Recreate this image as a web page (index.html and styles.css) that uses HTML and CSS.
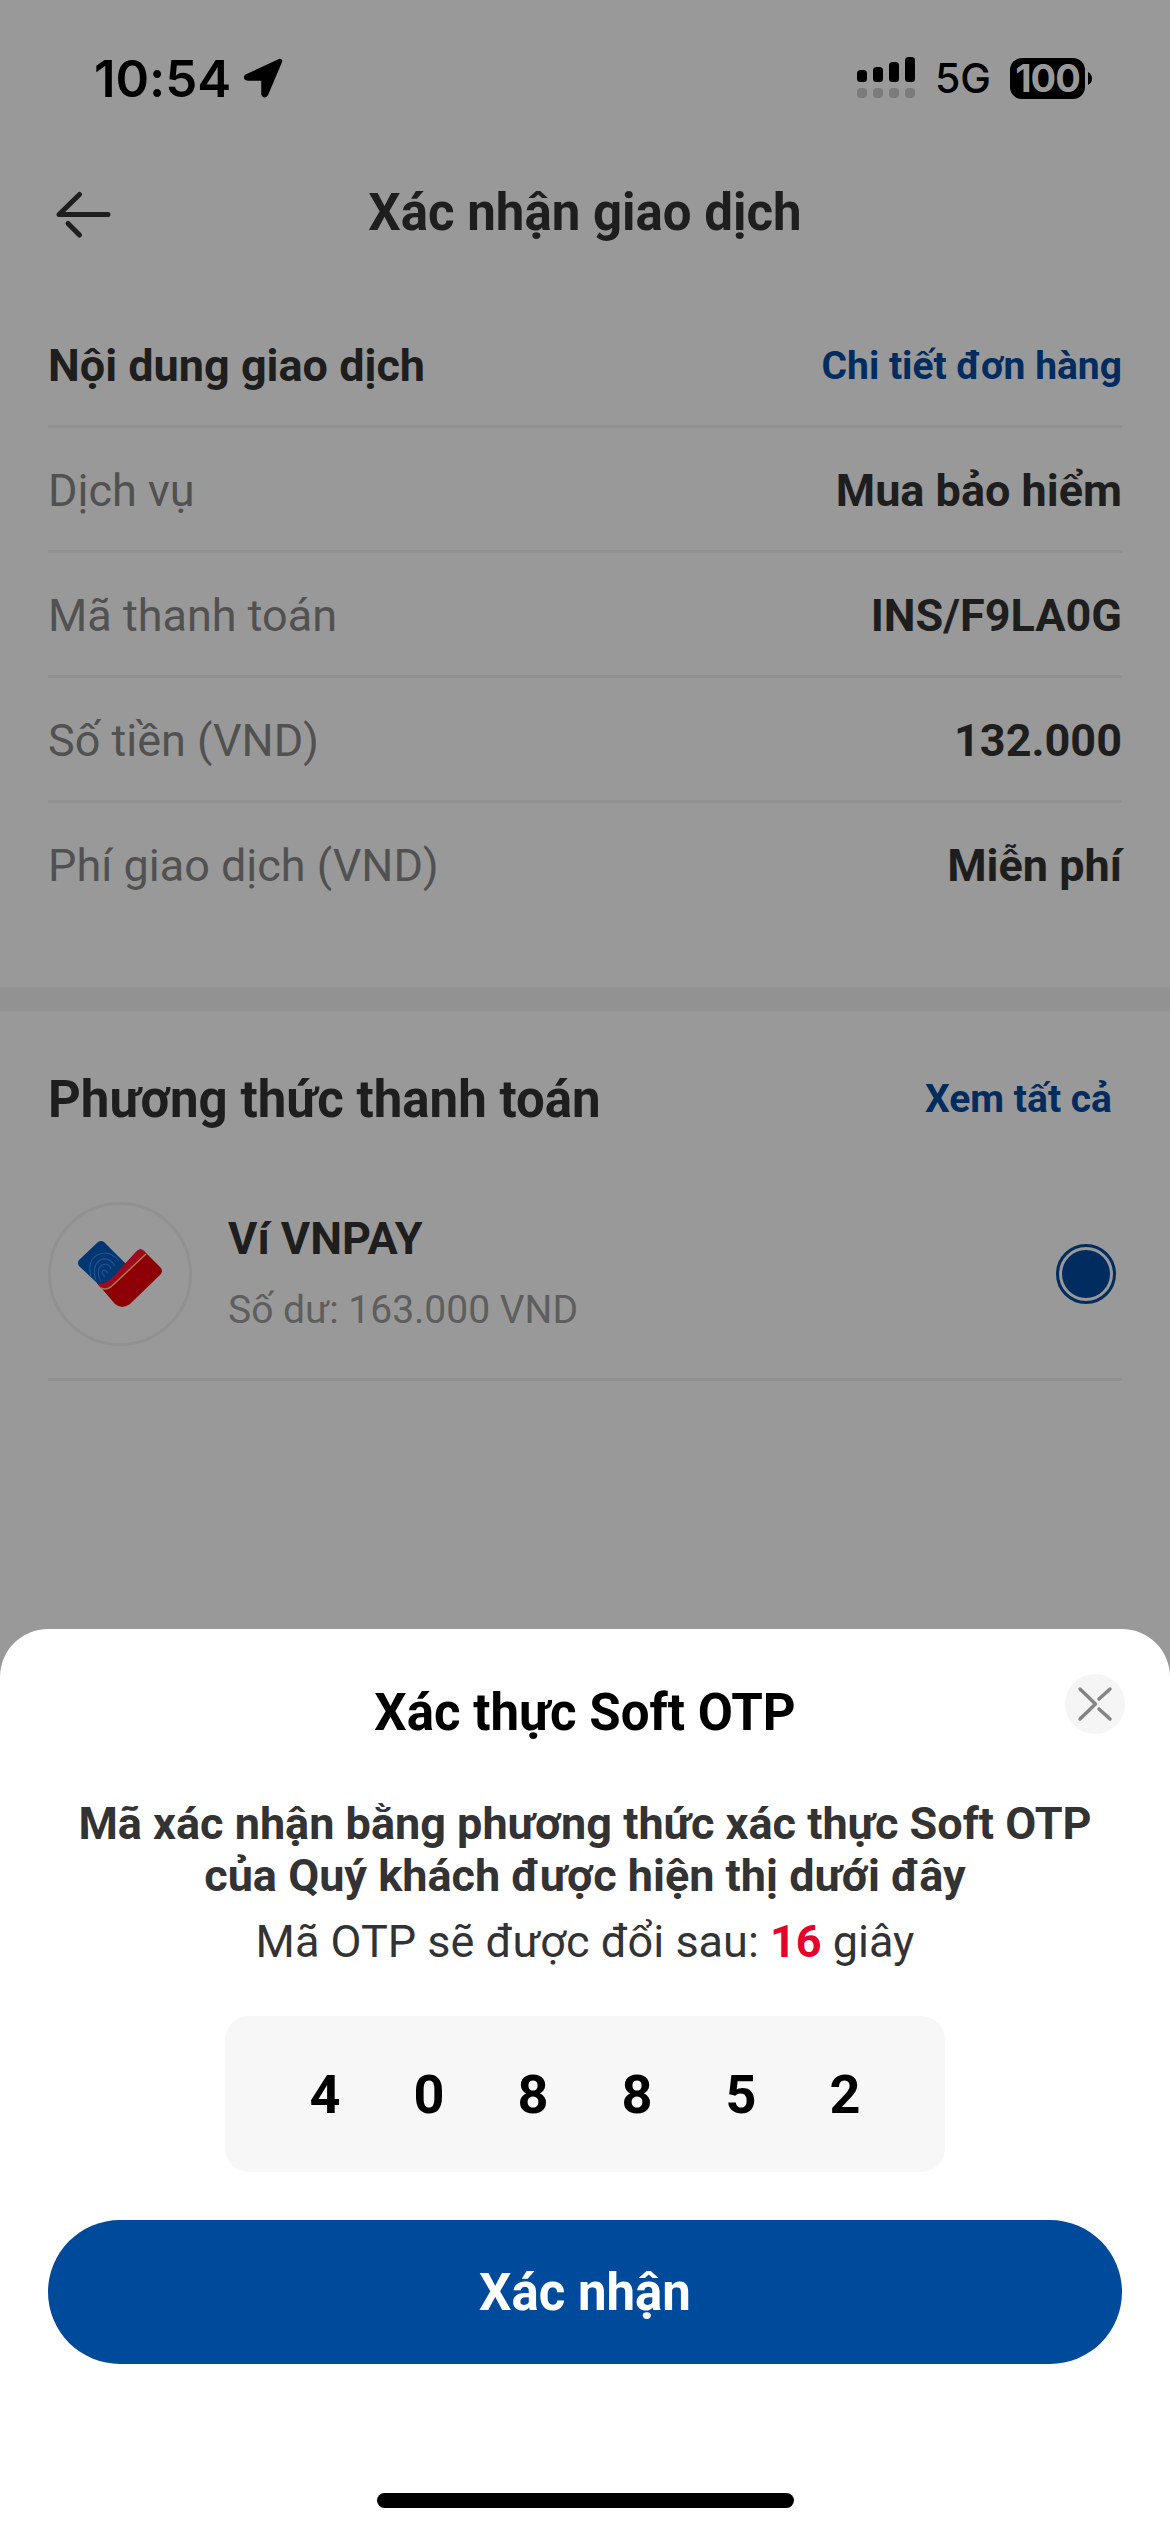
FILE: index.html
```html
<!DOCTYPE html>
<html lang="vi">
<head>
<meta charset="utf-8">
<title>Xác nhận giao dịch</title>
<link rel="stylesheet" href="styles.css">
</head>
<body>
<div class="screen">
  <main class="page">
    <div class="statusbar">
      <div class="clock">
        <span>10:54</span>
        <svg width="40" height="40" viewBox="0 0 40 40"><path d="M37 3 3.500 18.500Q2.500 20.500 5 20.500H20.500V36Q21.500 38.500 23 36Z" fill="#000" stroke="#000" stroke-width="4.500" stroke-linejoin="round"/></svg>
      </div>
      <div class="indicators">
        <svg class="signal" width="58" height="42" viewBox="0 0 58 42">
          <g fill="#000"><rect y="13" width="10" height="12" rx="3.500"/><rect x="16" y="10" width="10" height="15" rx="3.500"/><rect x="32" y="5" width="10" height="20" rx="3.500"/><rect x="48" width="10" height="25" rx="3.500"/></g>
          <g fill="#7b7b7b"><rect y="31" width="10" height="10" rx="4"/><rect x="16" y="31" width="10" height="10" rx="4"/><rect x="32" y="31" width="10" height="10" rx="4"/><rect x="48" y="31" width="10" height="10" rx="4"/></g>
        </svg>
        <span class="network">5G</span>
        <span class="battery">100</span>
        <svg class="cap" width="4" height="13" viewBox="0 0 4 13"><path d="M0 0Q4 2 4 6.500T0 13Z"/></svg>
      </div>
    </div>
    <header class="navbar">
      <svg class="back" width="60" height="50" viewBox="0 0 60 50" fill="none" stroke="#1e1e1e" stroke-width="5" stroke-linecap="round" stroke-linejoin="round"><path d="M54 24.500H5L25.500 4.500M14 33.500 25.500 45"/></svg>
      <h1>Xác nhận giao dịch</h1>
    </header>
    <section class="details">
      <div class="row"><h2>Nội dung giao dịch</h2><a class="link">Chi tiết đơn hàng</a></div>
      <div class="row"><span class="label">Dịch vụ</span><b>Mua bảo hiểm</b></div>
      <div class="row"><span class="label">Mã thanh toán</span><b>INS/F9LA0G</b></div>
      <div class="row"><span class="label">Số tiền (VND)</span><b>132.000</b></div>
      <div class="row"><span class="label">Phí giao dịch (VND)</span><b>Miễn phí</b></div>
    </section>
    <section class="methods">
      <div class="methods-head"><h2>Phương thức thanh toán</h2><a class="link">Xem tất cả</a></div>
      <div class="wallet">
        <div class="logo">
          <svg width="90" height="72" viewBox="75 1237 90 72">
            <path d="M98 1241Q101 1239 104 1241L127 1264 103 1285Q98 1284 95 1280L79 1265Q77 1262 79 1259Z" fill="#013672"/>
            <g fill="none" stroke="#1f5690" stroke-width="1.100"><path d="M91 1275Q87 1260 97 1254 109 1248 119 1260"/><path d="M96 1279Q91 1266 100 1259 109 1255 115 1265"/><path d="M101 1280Q95 1270 102 1264 109 1261 111 1268"/><path d="M105 1276Q99 1270 105 1269L108 1272"/></g>
            <path d="M97 1282Q105 1284 112 1277L136 1251Q140 1246 144 1250L160 1266Q164 1270 160 1274L130 1303Q122 1309 115 1303Z" fill="#8d0006"/>
            <path d="M97 1282Q105 1284 112 1277L136 1251Q140 1246 144 1250L146 1253 113 1284Q105 1291 100 1286Z" fill="#9d0b1c"/>
            <path d="M101 1287Q107 1290 113 1284L146 1253" fill="none" stroke="#b4744f" stroke-width="1.500"/>
          </svg>
        </div>
        <div class="wallet-text"><b>Ví VNPAY</b><span>Số dư: 163.000 VND</span></div>
        <span class="radio"></span>
      </div>
    </section>
  </main>
  <section class="sheet">
    <header class="sheet-head">
      <h2>Xác thực Soft OTP</h2>
      <button class="close" aria-label="Đóng"><svg width="60" height="60" viewBox="0 0 60 60" fill="none" stroke="#858585" stroke-width="3.500" stroke-linecap="round" stroke-linejoin="round"><path d="M15 15 30.500 30 15 45M34 25 45 15M34 35 45 45"/></svg></button>
    </header>
    <p class="message">Mã xác nhận bằng phương thức xác thực Soft OTP<br>của Quý khách được hiện thị dưới đây</p>
    <p class="timer">Mã OTP sẽ được đổi sau: <b>16</b> giây</p>
    <div class="otp"><span>4</span><span>0</span><span>8</span><span>8</span><span>5</span><span>2</span></div>
    <button class="confirm">Xác nhận</button>
    <div class="home"></div>
  </section>
</div>
</body>
</html>
```
FILE: styles.css
```css
* { box-sizing: border-box; }
body { margin: 0; font-family: Roboto, "Noto Sans", sans-serif; }
h1, h2, p { margin: 0; }
button { border: 0; padding: 0; font-family: inherit; }
svg { display: block; flex: none; }

.screen { width: 1170px; height: 2532px; display: flex; flex-direction: column; background: #999; overflow: hidden; }
.page { height: 1629px; flex: none; color: #1e1e1e; }

.statusbar { height: 156px; padding: 0 78px 0 94px; display: flex; justify-content: space-between; align-items: center; color: #000; font-family: Inter, sans-serif; }
.clock { display: flex; align-items: center; gap: 12px; font-size: 51px; font-weight: 600; letter-spacing: -0.1px; }
.indicators { display: flex; align-items: center; }
.network { margin-left: 20px; width: 75px; font-size: 41px; font-weight: 450; }
.battery { width: 75px; height: 41px; border-radius: 12px; background: #000; color: #999; font-size: 38px; font-weight: 700; line-height: 41px; text-align: center; letter-spacing: -1px; }
.cap { margin-left: 3px; }

.navbar { height: 114px; display: grid; grid-template-columns: 117px 1fr 117px; align-items: center; }
.back { margin: 3px 0 0 54px; }
.navbar h1 { font-size: 51px; line-height: 60px; text-align: center; }

.details { height: 741px; padding: 33px 48px 0; border-bottom: 24px solid #929292; }
.row { height: 125px; padding-top: 3px; display: flex; align-items: center; justify-content: space-between; border-bottom: 3px solid #919191; font-size: 45px; }
.row:last-child { border-bottom: 0; padding-top: 0; }
.row h2 { font-size: 45px; }
.label { color: #515151; }
.link { color: #012c60; font-size: 39px; font-weight: 700; }

.methods { padding: 48px 48px 0; }
.methods-head { height: 80px; display: flex; align-items: center; justify-content: space-between; padding-right: 10px; }
.methods-head h2 { font-size: 51px; }
.wallet { height: 242px; display: flex; align-items: center; border-bottom: 3px solid #919191; padding: 31px 6px 0 0; }
.logo { width: 144px; height: 144px; border: 3px solid #919191; border-radius: 50%; display: flex; align-items: center; justify-content: center; }
.wallet-text { margin: 0 0 3px 36px; flex: 1; display: flex; flex-direction: column; gap: 22px; }
.wallet-text b { font-size: 45px; line-height: 53px; }
.wallet-text span { font-size: 39px; line-height: 46px; color: #5e5e5e; }
.radio { width: 60px; height: 60px; border: 3px solid #012c60; border-radius: 50%; padding: 3px; background: #012c60 content-box; }

.sheet { flex: 1; background: #fff; border-radius: 48px 48px 0 0; padding: 0 48px; display: flex; flex-direction: column; align-items: center; color: #333; }
.sheet-head { width: 100%; height: 161px; padding-top: 45px; display: grid; grid-template-columns: 78px 1fr 78px; align-items: start; }
.sheet-head h2 { grid-column: 2; margin-top: 9px; font-size: 51px; line-height: 60px; text-align: center; color: #000; }
.close { width: 60px; height: 60px; margin-left: 21px; border-radius: 50%; background: #f5f5f5; }
.message { font-size: 45px; font-weight: 700; line-height: 52px; text-align: center; padding-top: 8px; white-space: nowrap; }
.timer { font-size: 45px; line-height: 53px; margin-top: 13px; }
.timer b { color: #e6002a; }
.otp { width: 720px; height: 156px; margin-top: 48px; padding: 0 48px; border-radius: 24px; background: #f7f7f7; display: grid; grid-template-columns: repeat(6, 1fr); align-items: center; text-align: center; font-size: 54px; font-weight: 700; color: #000; }
.confirm { width: 1074px; height: 144px; margin-top: 48px; border-radius: 72px; background: #004a9c; color: #fff; font-size: 51px; font-weight: 700; }
.home { width: 417px; height: 15px; margin-top: 129px; border-radius: 8px; background: #000; }
```
